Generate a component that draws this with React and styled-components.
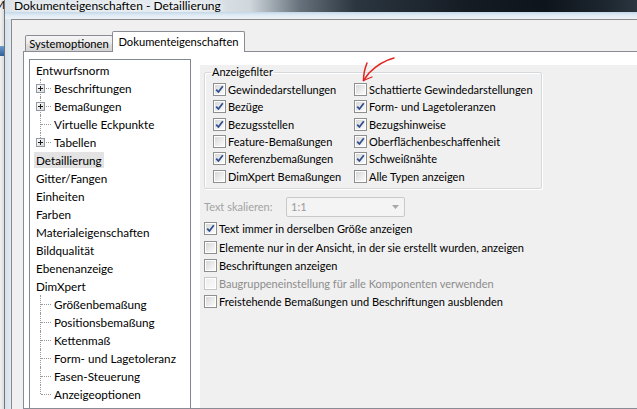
import React from 'react';
import styled, { createGlobalStyle } from 'styled-components';

const FONT = `Lato, "Noto Sans", sans-serif`;

const GlobalStyle = createGlobalStyle`
  html, body { margin: 0; padding: 0; }
  body { width: 637px; height: 409px; overflow: hidden; background: #f0f0f0; font-family: ${FONT}; }
`;

const Screen = styled.div`
  position: relative;
  width: 637px;
  height: 409px;
  overflow: hidden;
  display: flex;
  font-family: ${FONT};
  font-size: 11px;
  color: #000;
`;

const BehindWindow = styled.div`
  width: 4px;
  flex: none;
  overflow: hidden;
  background: linear-gradient(to right, #f2f2f2, #dcdcdc);
  border-right: 1px solid #70767c;
  display: flex;
  flex-direction: column;
`;

const BehindLetter = styled.span`
  margin-left: -6px;
  margin-top: ${p => p.$top}px;
  font-size: 12px;
  line-height: 12px;
  color: #111;
`;

const BehindIcon = styled.span`
  margin-top: ${p => p.$top}px;
  width: 4px;
  height: 10px;
  background: linear-gradient(#6a9ccc, #2d5f98);
`;

const WindowFrame = styled.div`
  flex: 1;
  display: flex;
  flex-direction: column;
  background: linear-gradient(to right, #d6e1ea, #e4ecf2 7px);
  min-width: 0;
`;

const TitleBar = styled.div`
  height: 12px;
  flex: none;
  padding-left: 9px;
  background: linear-gradient(to right, #dbe3e9 0, #e6ecf0 180px, #cfd6dc 245px, #66717b 295px, #2c3640 350px, #151c24 460px, #0e141b 540px, #1d262f 600px, #2c3640 632px);
  font-size: 12px;
  line-height: 12px;
  white-space: nowrap;
  overflow: hidden;
`;

const TitleText = styled.span`
  color: #000;
  text-shadow: 0 0 6px #fff, 0 0 10px #fff;
`;

const TitleGlow = styled.div`
  height: 7px;
  flex: none;
  background: linear-gradient(to bottom, #c2d7e8 0, #dfeaf3 3px, #eef3f7 7px);
`;

const FrameInner = styled.div`
  flex: 1;
  display: flex;
  padding-left: 6px;
  min-height: 0;
`;

const Body = styled.div`
  flex: 1;
  background: #f0f0f0;
  border-top: 1px solid #8a8a8a;
  border-left: 1px solid #8a8a8a;
  padding: 11px 0 0 11px;
  display: flex;
  flex-direction: column;
  min-width: 0;
`;

const TabStrip = styled.div`
  display: flex;
  align-items: flex-end;
  height: 21px;
  padding-left: 2px;
  margin-bottom: -1px;
  position: relative;
  z-index: 1;
  flex: none;
`;

const Tab = styled.div`
  box-sizing: border-box;
  width: ${p => p.$w}px;
  height: ${p => (p.$active ? 21 : 16)}px;
  margin-bottom: ${p => (p.$active ? 0 : 1)}px;
  margin-left: ${p => (p.$active ? -1 : 0)}px;
  border: 1px solid #898c95;
  border-bottom: none;
  background: ${p => (p.$active ? '#fff' : 'linear-gradient(#f5f5f5, #ebebeb 50%, #dedede 51%, #d4d4d4)')};
  line-height: ${p => (p.$active ? 19 : 15)}px;
  font-size: 11.2px;
  text-align: center;
  white-space: nowrap;
  border-radius: 2px 2px 0 0;
`;

const TabPage = styled.div`
  flex: 1;
  width: 640px;
  background: #fff;
  border: 1px solid #898c95;
  padding: 7px 0 0 5px;
  display: grid;
  grid-template-columns: 162px 1fr;
  column-gap: 9px;
  min-height: 0;
`;

const Tree = styled.div`
  box-sizing: border-box;
  border: 1px solid #828790;
  border-bottom: none;
  background: #fff;
  padding-top: 1px;
  display: flex;
  flex-direction: column;
  font-size: 11.7px;
`;

const TreeRow = styled.div`
  height: 18px;
  display: flex;
  align-items: center;
  padding-left: 4px;
  white-space: nowrap;
`;

const Indent = styled.span`
  position: relative;
  width: 18px;
  height: 100%;
  flex: none;
  &::before {
    content: '';
    position: absolute;
    left: 6px;
    top: 0;
    bottom: ${p => (p.$last ? '9px' : '0')};
    border-left: 1px dotted #9a9a9a;
  }
  &::after {
    content: '';
    position: absolute;
    left: 7px;
    right: 1px;
    top: 9px;
    border-top: 1px dotted #9a9a9a;
  }
`;

const PlusWrap = styled.span`
  position: absolute;
  left: 2px;
  top: 5px;
  width: 9px;
  height: 9px;
  z-index: 1;
  display: flex;
`;

const TreeLabel = styled.span`
  padding: 0 2px;
  line-height: 16px;
  background: ${p => (p.$selected ? '#e3e3e3' : 'transparent')};
`;

const RightPanel = styled.div`
  margin-top: 6px;
  background: #f0f0f0;
  padding-left: 4px;
  display: flex;
  flex-direction: column;
`;

const GroupBox = styled.fieldset`
  box-sizing: border-box;
  width: 338px;
  margin: 0;
  padding: 2px 0 3px 8px;
  border: 1px solid #d5d9dc;
  box-shadow: inset 1px 1px 0 #fff, 1px 1px 0 #fff;
  border-radius: 2px;
  display: grid;
  grid-template-columns: 141px 1fr;
  grid-auto-rows: 17.3px;
`;

const Legend = styled.legend`
  padding: 0 1px;
  margin-left: -2px;
  line-height: 14px;
`;

const CheckRow = styled.label`
  display: flex;
  align-items: center;
  gap: 2px;
  height: ${p => p.$h || 17.3}px;
  white-space: nowrap;
  color: ${p => (p.$disabled ? '#8d8d8d' : '#000')};
`;

const ScaleRow = styled.div`
  display: flex;
  align-items: center;
  margin-top: 8px;
  height: 20px;
`;

const ScaleLabel = styled.span`
  width: 82px;
  color: #a3a3a3;
  white-space: nowrap;
`;

const Combo = styled.div`
  box-sizing: border-box;
  width: 119px;
  height: 20px;
  border: 1px solid #c9c9c9;
  background: #f4f4f4;
  border-radius: 2px;
  display: flex;
  align-items: center;
  justify-content: space-between;
  padding: 0 5px 0 4px;
  color: #9a9a9a;
`;

const OptionList = styled.div`
  margin-top: 3px;
  display: flex;
  flex-direction: column;
`;

const Annotation = styled.svg`
  position: absolute;
  left: 350px;
  top: 52px;
  pointer-events: none;
`;

function CheckBox({ checked, disabled }) {
  const id = disabled ? 'cbd' : 'cbg';
  return (
    <svg width="13" height="13" viewBox="0 0 13 13" style={{ flex: 'none' }}>
      <defs>
        <linearGradient id="cbg" x1="0" y1="0" x2="1" y2="1">
          <stop offset="0" stopColor="#d8d8d8" />
          <stop offset="1" stopColor="#fbfbfb" />
        </linearGradient>
        <linearGradient id="cbd" x1="0" y1="0" x2="1" y2="1">
          <stop offset="0" stopColor="#eeeeee" />
          <stop offset="1" stopColor="#fafafa" />
        </linearGradient>
      </defs>
      <rect x="0.5" y="0.5" width="12" height="12" fill="#fff" stroke={disabled ? '#c6c6c6' : '#8e8f8f'} />
      <rect x="2" y="2" width="9" height="9" fill={`url(#${id})`} />
      {checked && (
        <path d="M3.2 6.6 L5.4 9 L9.8 3.3" fill="none" stroke="#2f4f8f" strokeWidth="1.8" strokeLinejoin="round" />
      )}
    </svg>
  );
}

function PlusBox() {
  return (
    <PlusWrap>
      <svg width="9" height="9" viewBox="0 0 9 9">
        <defs>
          <linearGradient id="pb" x1="0" y1="0" x2="1" y2="1">
            <stop offset="0" stopColor="#ffffff" />
            <stop offset="1" stopColor="#d6d6d6" />
          </linearGradient>
        </defs>
        <rect x="0.5" y="0.5" width="8" height="8" fill="url(#pb)" stroke="#8f9aa6" />
        <path d="M2 4.5 H7 M4.5 2 V7" stroke="#1a1a1a" strokeWidth="1" />
      </svg>
    </PlusWrap>
  );
}

const treeItems = [
  { label: 'Entwurfsnorm' },
  { label: 'Beschriftungen', child: true, plus: true },
  { label: 'Bemaßungen', child: true, plus: true },
  { label: 'Virtuelle Eckpunkte', child: true },
  { label: 'Tabellen', child: true, plus: true, last: true },
  { label: 'Detaillierung', selected: true },
  { label: 'Gitter/Fangen' },
  { label: 'Einheiten' },
  { label: 'Farben' },
  { label: 'Materialeigenschaften' },
  { label: 'Bildqualität' },
  { label: 'Ebenenanzeige' },
  { label: 'DimXpert' },
  { label: 'Größenbemaßung', child: true },
  { label: 'Positionsbemaßung', child: true },
  { label: 'Kettenmaß', child: true },
  { label: 'Form- und Lagetoleranz', child: true },
  { label: 'Fasen-Steuerung', child: true },
  { label: 'Anzeigeoptionen', child: true, last: true },
];

const filters = [
  ['Gewindedarstellungen', true],
  ['Schattierte Gewindedarstellungen', false],
  ['Bezüge', true],
  ['Form- und Lagetoleranzen', true],
  ['Bezugsstellen', true],
  ['Bezugshinweise', true],
  ['Feature-Bemaßungen', false],
  ['Oberflächenbeschaffenheit', true],
  ['Referenzbemaßungen', true],
  ['Schweißnähte', true],
  ['DimXpert Bemaßungen', false],
  ['Alle Typen anzeigen', false],
];

const options = [
  { label: 'Text immer in derselben Größe anzeigen', checked: true },
  { label: 'Elemente nur in der Ansicht, in der sie erstellt wurden, anzeigen' },
  { label: 'Beschriftungen anzeigen' },
  { label: 'Baugruppeneinstellung für alle Komponenten verwenden', disabled: true },
  { label: 'Freistehende Bemaßungen und Beschriftungen ausblenden' },
];

export default function App() {
  return (
    <>
      <GlobalStyle />
      <Screen>
        <BehindWindow>
          <BehindLetter $top={-1}>M</BehindLetter>
          <BehindIcon $top={35} />
        </BehindWindow>
        <WindowFrame>
          <TitleBar>
            <TitleText>Dokumenteigenschaften - Detaillierung</TitleText>
          </TitleBar>
          <TitleGlow />
          <FrameInner>
            <Body>
              <TabStrip>
                <Tab $w={88}>Systemoptionen</Tab>
                <Tab $w={133} $active>Dokumenteigenschaften</Tab>
              </TabStrip>
              <TabPage>
                <Tree>
                  {treeItems.map(item => (
                    <TreeRow key={item.label}>
                      {item.child && (
                        <Indent $last={item.last}>{item.plus && <PlusBox />}</Indent>
                      )}
                      <TreeLabel $selected={item.selected}>{item.label}</TreeLabel>
                    </TreeRow>
                  ))}
                </Tree>
                <RightPanel>
                  <GroupBox>
                    <Legend>Anzeigefilter</Legend>
                    {filters.map(([label, checked]) => (
                      <CheckRow key={label}>
                        <CheckBox checked={checked} />
                        <span>{label}</span>
                      </CheckRow>
                    ))}
                  </GroupBox>
                  <ScaleRow>
                    <ScaleLabel>Text skalieren:</ScaleLabel>
                    <Combo>
                      <span>1:1</span>
                      <svg width="7" height="4" viewBox="0 0 7 4">
                        <path d="M0 0 H7 L3.5 4 Z" fill="#a8a8a8" />
                      </svg>
                    </Combo>
                  </ScaleRow>
                  <OptionList>
                    {options.map(o => (
                      <CheckRow key={o.label} $h={18.2} $disabled={o.disabled}>
                        <CheckBox checked={o.checked} disabled={o.disabled} />
                        <span>{o.label}</span>
                      </CheckRow>
                    ))}
                  </OptionList>
                </RightPanel>
              </TabPage>
            </Body>
          </FrameInner>
        </WindowFrame>
        <Annotation width="50" height="34" viewBox="350 52 50 34">
          <path d="M394 58 C386 60 376 66 369 73 L363.5 80.5" fill="none" stroke="#e3231c" strokeWidth="1.5" strokeLinecap="round" />
          <path d="M363.5 80.5 C363.5 75 364.5 69 367 63" fill="none" stroke="#e3231c" strokeWidth="1.5" strokeLinecap="round" />
          <path d="M363.5 80.5 L372 77" fill="none" stroke="#e3231c" strokeWidth="1.3" strokeLinecap="round" />
        </Annotation>
      </Screen>
    </>
  );
}
